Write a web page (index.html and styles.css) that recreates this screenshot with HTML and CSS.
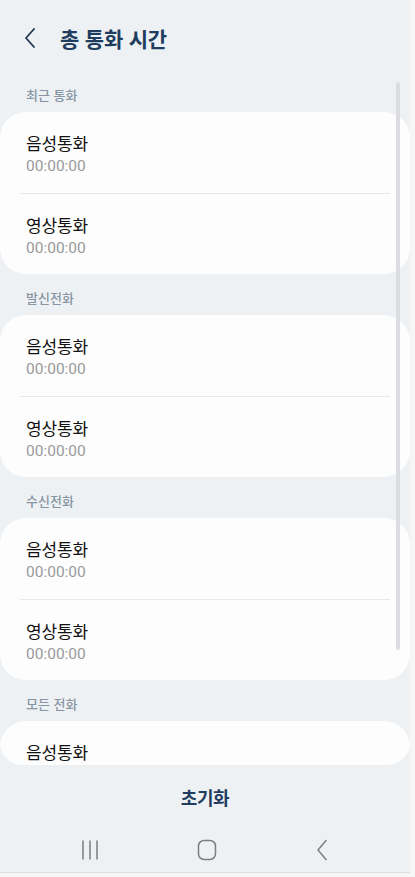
FILE: index.html
```html
<!DOCTYPE html>
<html lang="ko">
<head>
    <meta charset="UTF-8">
    <meta name="viewport" content="width=device-width, initial-scale=1.0">
    <title>총 통화 시간</title>
    <link rel="stylesheet" href="styles.css">
</head>
<body>
<div class="screen">
    <header class="header">
        <button class="back-btn" aria-label="뒤로">
            <svg width="14" height="22" viewBox="0 0 14 22"><path d="M11 2 L3 11 L11 20" fill="none" stroke="#1f3550" stroke-width="1.8" stroke-linecap="round" stroke-linejoin="round"/></svg>
        </button>
        <h1>총 통화 시간</h1>
    </header>

    <main class="list">
        <div class="scrollbar"></div>

        <p class="section-label">최근 통화</p>
        <div class="card">
            <div class="row">
                <p class="row-title">음성통화</p>
                <p class="row-time">00:00:00</p>
            </div>
            <div class="row">
                <p class="row-title">영상통화</p>
                <p class="row-time">00:00:00</p>
            </div>
        </div>

        <p class="section-label">발신전화</p>
        <div class="card">
            <div class="row">
                <p class="row-title">음성통화</p>
                <p class="row-time">00:00:00</p>
            </div>
            <div class="row">
                <p class="row-title">영상통화</p>
                <p class="row-time">00:00:00</p>
            </div>
        </div>

        <p class="section-label">수신전화</p>
        <div class="card">
            <div class="row">
                <p class="row-title">음성통화</p>
                <p class="row-time">00:00:00</p>
            </div>
            <div class="row">
                <p class="row-title">영상통화</p>
                <p class="row-time">00:00:00</p>
            </div>
        </div>

        <p class="section-label">모든 전화</p>
        <div class="card">
            <div class="row">
                <p class="row-title">음성통화</p>
            </div>
        </div>
    </main>

    <div class="footer">
        <button class="reset-btn">초기화</button>
    </div>

    <nav class="navbar">
        <svg width="18" height="20" viewBox="0 0 18 20"><path d="M2 1 V19 M9 1 V19 M16 1 V19" stroke="#7a7d82" stroke-width="1.5" stroke-linecap="round"/></svg>
        <svg width="20" height="22" viewBox="0 0 20 22"><rect x="1.5" y="1.5" width="17" height="19" rx="5.5" fill="none" stroke="#7a7d82" stroke-width="1.5"/></svg>
        <svg width="14" height="22" viewBox="0 0 14 22"><path d="M11 1.5 L3 11 L11 20.5" fill="none" stroke="#7a7d82" stroke-width="1.5" stroke-linecap="round" stroke-linejoin="round"/></svg>
    </nav>
</div>
</body>
</html>
```

FILE: styles.css
```css
* {
    box-sizing: border-box;
    margin: 0;
    padding: 0;
}

body {
    background-color: #f6f6f6;
    font-family: 'Noto Sans CJK KR', 'Noto Sans', Roboto, sans-serif;
}

.screen {
    width: 410px;
    height: 873px;
    background-color: #eef1f4;
    border-bottom: 1px solid #dcdfe3;
    display: flex;
    flex-direction: column;
}

.header {
    height: 71px;
    padding: 5px 0 0 22px;
    display: flex;
    align-items: center;
    gap: 22px;
    flex-shrink: 0;
}

.back-btn {
    background: none;
    border: none;
    width: 16px;
    height: 24px;
    display: flex;
    align-items: center;
    justify-content: center;
}

.header h1 {
    font-size: 21px;
    font-weight: 700;
    color: #1f3d5e;
    letter-spacing: -0.2px;
}

.list {
    flex: 1;
    overflow: hidden;
    position: relative;
    border-radius: 0 0 22px 22px;
}

.scrollbar {
    position: absolute;
    top: 11px;
    left: 396px;
    width: 4px;
    height: 568px;
    border-radius: 2px;
    background-color: #dcdde1;
}

.section-label {
    padding: 15px 0 8px 26px;
    font-size: 13px;
    line-height: 18px;
    font-weight: 500;
    color: #8795a3;
}

.card {
    background-color: #fdfdfd;
    border-radius: 26px;
    overflow: hidden;
}

.row {
    height: 81px;
    padding: 20px 26px 0;
}

.row + .row {
    border-top: 1px solid #e6e8eb;
    margin: 0 20px;
    padding: 20px 6px 0;
}

.row-title {
    font-size: 17px;
    line-height: 22px;
    color: #111;
    letter-spacing: -0.1px;
}

.row-time {
    margin-top: 3px;
    font-family: Roboto, 'Noto Sans', sans-serif;
    font-size: 15.5px;
    line-height: 18px;
    color: #999a9c;
}

.footer {
    height: 63px;
    display: flex;
    align-items: center;
    justify-content: center;
    flex-shrink: 0;
}

.reset-btn {
    background: none;
    border: none;
    font-family: 'Noto Sans CJK KR', sans-serif;
    font-size: 18px;
    font-weight: 700;
    color: #1f3d5e;
    letter-spacing: -0.4px;
}

.navbar {
    height: 44px;
    display: flex;
    align-items: center;
    flex-shrink: 0;
    padding: 0 0 0 81px;
    gap: 98px;
}
```
